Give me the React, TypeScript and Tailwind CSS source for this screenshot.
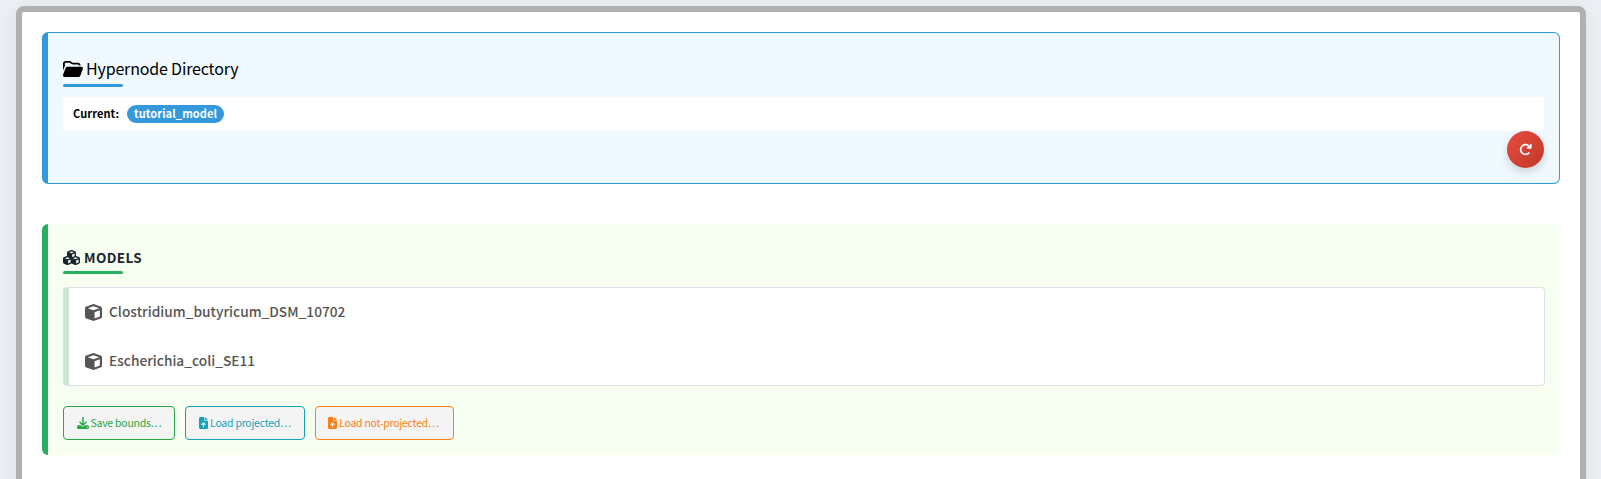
import type { ReactNode } from "react";
import { FaCube, FaCubes, FaDownload, FaFileArrowUp, FaArrowRotateRight } from "react-icons/fa6";

function FolderOpenIcon() {
  return (
    <svg viewBox="32 32 512 448" preserveAspectRatio="none" className="mt-[3px] h-4 w-5 shrink-0" fill="currentColor">
      <path d="M56 225.600 32.400 296.200V96c0-35.300 28.700-64 64-64h100.700c12.600 0 24.800 3.700 35.200 10.700l38.400 27.900c6.900 5.500 15.500 8.500 24.300 8.500H416c35.300 0 64 28.700 64 64v17h-48v-17c0-8.800-7.200-16-16-16H295c-19.700 0-38.800-6.400-54.400-18.200L203.900 83c-2.100-1.900-4.500-3-6.800-3H96.400c-8.800 0-16 7.200-16 16v85.400c-11 11.700-19.500 27-24.400 44.200z" />
      <path d="M147.500 192H500c32.800 0 50 32 40 60L478 438c-8 25-26 42-52 42H76c-28 0-46-14-43-46l5-30 61-176c7-21 26-36 48.500-36z" />
    </svg>
  );
}

function Heading({ children, bar }: { children: ReactNode; bar: string }) {
  return (
    <div className="flex flex-col">
      {children}
      <div className={`h-[3px] w-[60px] rounded-sm ${bar}`} />
    </div>
  );
}

const models = ["Clostridium_butyricum_DSM_10702", "Escherichia_coli_SE11"];

export default function App() {
  return (
    <div className="h-[479px] overflow-hidden bg-[#ecf0f5] px-4 pt-1.5 pr-[15px] font-['Noto_Sans_CJK_SC',sans-serif] text-black">
      <main className="h-[520px] rounded-lg border-[6px] border-[#b0b0b0] bg-white p-5 shadow-[0_4px_20px_rgba(0,0,0,0.08)]">
        <section className="h-[152px] rounded-md border border-l-[6px] border-[#3498db] bg-[#f0f9ff] px-[15px]">
          <Heading bar="bg-[#3498db]">
            <h2 className="flex h-[51px] items-start gap-[3px] pt-[25px] text-[16px] leading-[20px] tracking-[-0.17px]">
              <FolderOpenIcon />
              Hypernode Directory
            </h2>
          </Heading>
          <div className="mt-[10px] flex h-[34px] items-center rounded bg-white px-[10px] text-[11px] font-bold tracking-[0.1px]">
            <span className="w-[54px] pb-px">Current:</span>
            <span className="flex h-[18px] w-[97px] items-center justify-center rounded-full bg-[#3498db] pb-px text-white">
              tutorial_model
            </span>
          </div>
          <div className="flex justify-end">
            <button className="flex size-[37px] items-center justify-center rounded-full bg-gradient-to-br from-[#e74c3c] to-[#c0392b] text-white shadow-[0_4px_8px_rgba(0,0,0,0.15)]">
              <FaArrowRotateRight className="size-[13px]" />
            </button>
          </div>
        </section>

        <section className="mt-10 h-[231px] rounded-md border-l-[6px] border-[#27ae60] bg-[#f7fff0] px-[15px]">
          <Heading bar="bg-[#27ae60]">
            <h2 className="flex h-[47px] items-start gap-1 pt-[23px] text-[13.500px] leading-5 font-bold tracking-[0.4px] text-[#1a252f]">
              <FaCubes className="mt-0.5 size-[17px]" />
              MODELS
            </h2>
          </Heading>
          <ul className="mt-[13px] h-[99px] rounded border border-l-[6px] border-[#dee2e6] border-l-[#d0e4d2] bg-white pl-4 text-[#555]">
            {models.map((name) => (
              <li key={name} className="flex h-[49px] items-center gap-[7px] text-[13.700px] font-medium tracking-[0.02px]">
                <FaCube className="size-[17px]" />
                <span className="pb-[3px]">{name}</span>
              </li>
            ))}
          </ul>
          <div className="mt-5 flex gap-[10px] text-[10.500px] tracking-[-0.250px]">
            <button className="flex h-[34px] w-[112px] items-center justify-center gap-0.5 rounded border border-[#28a745] bg-[#f4f4f4] text-[#28a745]">
              <FaDownload className="size-3" />
              <span>Save bounds…</span>
            </button>
            <button className="flex h-[34px] w-[120px] items-center justify-center gap-0.5 rounded border border-[#17a2b8] bg-[#f4f4f4] text-[#17a2b8]">
              <FaFileArrowUp className="h-3 w-[9px]" />
              <span>Load projected…</span>
            </button>
            <button className="flex h-[34px] w-[139px] items-center justify-center gap-0.5 rounded border border-[#fd7e14] bg-[#f4f4f4] pr-0.5 text-[#fd7e14]">
              <FaFileArrowUp className="h-3 w-[9px]" />
              <span>Load not-projected…</span>
            </button>
          </div>
        </section>
      </main>
    </div>
  );
}
